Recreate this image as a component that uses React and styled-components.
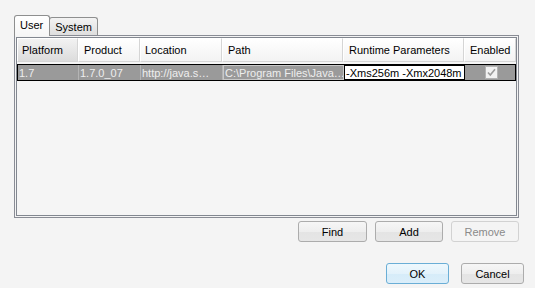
import React from "react";
import styled, { createGlobalStyle, css } from "styled-components";

const Global = createGlobalStyle`
  html, body { margin: 0; padding: 0; background: #f4f4f4; }
  body { font-family: "Liberation Sans", Arial, sans-serif; font-size: 11px; color: #000; }
`;

const Window = styled.div`
  width: 535px;
  height: 288px;
  box-sizing: border-box;
  padding: 15px 0 0 14px;
  display: flex;
  flex-direction: column;
  background: #f4f4f4;
`;

const TabBar = styled.div`
  display: flex;
  align-items: flex-end;
  height: 20px;
`;

const Tab = styled.div`
  box-sizing: border-box;
  display: flex;
  align-items: center;
  border: 1px solid #8e8f8f;
  border-bottom: none;
  border-radius: 3px 3px 0 0;
  ${(p) =>
    p.$active
      ? css`
          height: 21px;
          margin-bottom: -1px;
          padding: 0 6px 2px 5px;
          background: linear-gradient(#ffffff, #f6f6f6);
          position: relative;
          z-index: 1;
        `
      : css`
          height: 18px;
          margin-left: -1px;
          padding: 0 5px 0 5px;
          background: linear-gradient(#f3f3f3, #dedede);
        `}
`;

const Panel = styled.div`
  box-sizing: border-box;
  width: 505px;
  height: 183px;
  border: 1px solid #898c95;
  padding: 1px;
  background: #f4f4f4;
`;

const TableBox = styled.div`
  box-sizing: border-box;
  height: 100%;
  border: 1px solid #828790;
  background: #f5f5f5;
  display: flex;
  flex-direction: column;
`;

const cols = "61px 62px 82px 121px 121px 52px";

const HeaderRow = styled.div`
  display: grid;
  grid-template-columns: ${cols};
  height: 24px;
`;

const HeadCell = styled.div`
  box-sizing: border-box;
  display: flex;
  align-items: center;
  padding-left: ${(p) => p.$pad || 4}px;
  border-right: 1px solid #d5d5d5;
  border-bottom: 1px solid #d5d5d5;
  border-top: 1px solid #fff;
  border-left: 1px solid #fff;
  background: ${(p) =>
    p.$sorted
      ? "linear-gradient(#f2f2f2, #dcdcdc)"
      : "linear-gradient(#ffffff, #f3f3f3)"};
  white-space: nowrap;
  overflow: hidden;
`;

const DataRow = styled.div`
  display: grid;
  grid-template-columns: ${cols};
  height: 17px;
  margin-top: 2px;
  box-sizing: border-box;
  border: 1px solid #000;
  background: #9a9a9a;
`;

const Cell = styled.div`
  box-sizing: border-box;
  display: flex;
  align-items: center;
  padding-left: 1px;
  color: #eeeeee;
  border-right: 1px solid #b4b4b4;
  white-space: nowrap;
  overflow: hidden;
  ${(p) =>
    p.$focus &&
    css`
      border: 1px solid #c8c8c8;
    `}
  ${(p) =>
    p.$edit &&
    css`
      background: #fff;
      color: #000;
      border: 1px solid #000;
      padding-left: 1px;
    `}
  ${(p) =>
    p.$center &&
    css`
      justify-content: center;
      border-right: none;
      padding-left: 0;
    `}
`;

const ButtonRow = styled.div`
  display: flex;
  justify-content: flex-end;
  gap: ${(p) => p.$gap}px;
  padding-right: ${(p) => p.$right}px;
  margin-top: ${(p) => p.$top}px;
`;

const Button = styled.button`
  box-sizing: border-box;
  width: ${(p) => p.$w}px;
  height: 21px;
  margin: 0;
  padding: 0;
  font-family: inherit;
  font-size: 11px;
  border-radius: 3px;
  border: 1px solid #acacac;
  color: #000;
  background: linear-gradient(#f6f6f6 0%, #eeeeee 50%, #e4e4e4 51%, #e6e6e6 100%);
  ${(p) =>
    p.$default &&
    css`
      border-color: #6aaed6;
      background: linear-gradient(#eef8fd 0%, #e3f2fb 50%, #d6ecf9 51%, #dbeefa 100%);
    `}
  &:disabled {
    color: #8a8a8a;
    border-color: #d2d2d2;
    background: #f4f4f4;
  }
`;

const Check = () => (
  <svg width="13" height="13" viewBox="0 0 13 13">
    <rect x="0.5" y="0.5" width="12" height="12" fill="#f2f2f2" stroke="#b3b3b3" />
    <path d="M3 6.5 L5.3 9 L10 3.2" fill="none" stroke="#9c9c9c" strokeWidth="1.6" />
  </svg>
);

export default function App() {
  return (
    <>
      <Global />
      <Window>
        <TabBar>
          <Tab $active>User</Tab>
          <Tab>System</Tab>
        </TabBar>
        <Panel>
          <TableBox>
            <HeaderRow>
              <HeadCell $sorted $pad={4}>Platform</HeadCell>
              <HeadCell $pad={5}>Product</HeadCell>
              <HeadCell $pad={4}>Location</HeadCell>
              <HeadCell $pad={5}>Path</HeadCell>
              <HeadCell $pad={5}>Runtime Parameters</HeadCell>
              <HeadCell $pad={5}>Enabled</HeadCell>
            </HeaderRow>
            <DataRow>
              <Cell>1.7</Cell>
              <Cell>1.7.0_07</Cell>
              <Cell>http://java.s…</Cell>
              <Cell $focus>C:\Program Files\Java…</Cell>
              <Cell $edit>-Xms256m -Xmx2048m</Cell>
              <Cell $center>
                <Check />
              </Cell>
            </DataRow>
          </TableBox>
        </Panel>
        <ButtonRow $gap={8} $right={16} $top={3}>
          <Button $w={69}>Find</Button>
          <Button $w={68}>Add</Button>
          <Button $w={68} disabled>
            Remove
          </Button>
        </ButtonRow>
        <ButtonRow $gap={12} $right={11} $top={21}>
          <Button $w={63} $default>
            OK
          </Button>
          <Button $w={63}>Cancel</Button>
        </ButtonRow>
      </Window>
    </>
  );
}
